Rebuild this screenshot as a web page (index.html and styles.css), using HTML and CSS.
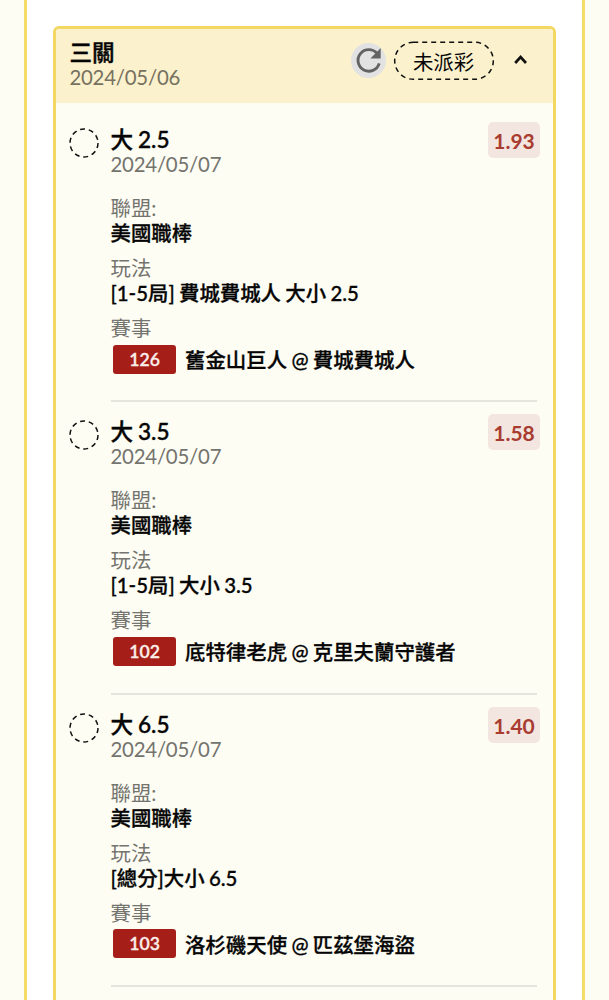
FILE: index.html
```html
<!DOCTYPE html>
<html lang="zh-Hant">
<head>
    <meta charset="UTF-8">
    <meta name="viewport" content="width=device-width, initial-scale=1.0">
    <title>三關</title>
    <link rel="stylesheet" href="styles.css">
</head>
<body>
    <main class="panel">
        <section class="ticket">
            <header class="ticket-header">
                <div class="ticket-info">
                    <h1 class="title">三關</h1>
                    <p class="date">2024/05/06</p>
                </div>
                <div class="ticket-actions">
                    <button class="refresh" aria-label="重新整理">
                        <svg width="35" height="35" viewBox="0 0 35 35">
                            <path d="M28.2 20.4A10.8 10.8 0 1 1 26.2 10.6" fill="none" stroke="#636363" stroke-width="2.9"/>
                            <path d="M29.7 5V15.4H19.4Z" fill="#636363"/>
                        </svg>
                    </button>
                    <span class="status">
                        <svg class="status-line" width="101" height="40" viewBox="0 0 101 40">
                            <rect x="1.7" y="1.3" width="98.6" height="37" rx="18.5"/>
                        </svg>
                        未派彩
                    </span>
                    <button class="toggle" aria-label="收合">
                        <svg width="16" height="12" viewBox="0 0 16 12">
                            <path d="M2.2 9L7.6 3L13 9" fill="none" stroke="#111" stroke-width="2.7"/>
                        </svg>
                    </button>
                </div>
            </header>

            <div class="bets">
                <article class="bet">
                    <svg class="circle" width="30" height="30" viewBox="0 0 30 30"><circle cx="15" cy="15" r="14"/></svg>
                    <div class="bet-body">
                        <div class="bet-top">
                            <div>
                                <h2 class="title">大 2.5</h2>
                                <p class="date">2024/05/07</p>
                            </div>
                            <span class="odds">1.93</span>
                        </div>
                        <dl class="details">
                            <dt>聯盟:</dt>
                            <dd>美國職棒</dd>
                            <dt>玩法</dt>
                            <dd>[1-5局] 費城費城人 大小 2.5</dd>
                            <dt>賽事</dt>
                            <dd class="match"><span class="number">126</span>舊金山巨人 @ 費城費城人</dd>
                        </dl>
                    </div>
                </article>

                <article class="bet">
                    <svg class="circle" width="30" height="30" viewBox="0 0 30 30"><circle cx="15" cy="15" r="14"/></svg>
                    <div class="bet-body">
                        <div class="bet-top">
                            <div>
                                <h2 class="title">大 3.5</h2>
                                <p class="date">2024/05/07</p>
                            </div>
                            <span class="odds">1.58</span>
                        </div>
                        <dl class="details">
                            <dt>聯盟:</dt>
                            <dd>美國職棒</dd>
                            <dt>玩法</dt>
                            <dd>[1-5局] 大小 3.5</dd>
                            <dt>賽事</dt>
                            <dd class="match"><span class="number">102</span>底特律老虎 @ 克里夫蘭守護者</dd>
                        </dl>
                    </div>
                </article>

                <article class="bet">
                    <svg class="circle" width="30" height="30" viewBox="0 0 30 30"><circle cx="15" cy="15" r="14"/></svg>
                    <div class="bet-body">
                        <div class="bet-top">
                            <div>
                                <h2 class="title">大 6.5</h2>
                                <p class="date">2024/05/07</p>
                            </div>
                            <span class="odds">1.40</span>
                        </div>
                        <dl class="details">
                            <dt>聯盟:</dt>
                            <dd>美國職棒</dd>
                            <dt>玩法</dt>
                            <dd>[總分]大小 6.5</dd>
                            <dt>賽事</dt>
                            <dd class="match"><span class="number">103</span>洛杉磯天使 @ 匹茲堡海盜</dd>
                        </dl>
                    </div>
                </article>
            </div>
        </section>
    </main>
</body>
</html>
```
FILE: styles.css
```css
* {
    box-sizing: border-box;
}
body {
    font-family: Lato, "Noto Sans CJK TC", sans-serif;
    font-size: 20.4px;
    background-color: #fefdf4;
    margin: 0;
    height: 1000px;
    overflow: hidden;
    color: #050505;
}
h1, h2, p, dl, dd {
    margin: 0;
}
button {
    border: none;
    padding: 0;
    background: none;
}
svg {
    display: block;
}
.panel {
    margin: 0 24px;
    padding: 26px 26px 0;
    height: 1000px;
    border: solid #f4dc69;
    border-width: 0 3px;
    background-color: #fff;
}
.ticket {
    height: 1020px;
    border: 3px solid #f2d862;
    border-radius: 6px;
    background-color: #fefdf4;
    overflow: hidden;
}
.ticket-header {
    display: flex;
    justify-content: space-between;
    height: 74px;
    padding: 11px 24px 0 13.4px;
    background-color: #fbf1cd;
}
.title {
    font-size: 22.6px;
    font-weight: 500;
    line-height: 26px;
    word-spacing: -0.8px;
    -webkit-text-stroke: 0.4px;
}
.date {
    line-height: 22px;
    letter-spacing: -0.23px;
    color: #74746f;
}
.ticket-header .date {
    color: #77725f;
}
.ticket-actions {
    display: flex;
    align-items: center;
    height: 40px;
}
.refresh {
    border-radius: 50%;
    background-color: #e2e2e2;
}
.status {
    position: relative;
    width: 101px;
    height: 40px;
    margin: 2px 19px 0 7px;
    line-height: 42px;
    text-align: center;
}
.status-line {
    position: absolute;
    top: 0;
    left: 0;
}
.status-line rect {
    fill: none;
    stroke: #111;
    stroke-width: 1.5;
    stroke-dasharray: 5 4;
}
.bets {
    padding-top: 7px;
}
.bet {
    display: flex;
    padding: 0 16px 0 13px;
}
.circle {
    flex: none;
    margin: 18px 12px 0 -0.5px;
}
.circle circle {
    fill: none;
    stroke: #111;
    stroke-width: 1.5;
    stroke-dasharray: 5 3.8;
}
.bet-body {
    flex: 1;
    height: 292.3px;
    padding-top: 17px;
    border-bottom: 2px solid #e6e5dd;
}
.bet-top {
    display: flex;
    justify-content: space-between;
    margin-bottom: 21px;
}
.odds {
    width: 52px;
    height: 36px;
    margin: -5px -3px 0 0;
    border-radius: 5px;
    background-color: #f3e6e0;
    color: #a93c30;
    font-size: 21px;
    font-weight: 700;
    line-height: 37px;
    text-align: center;
}
.details {
    line-height: 25px;
}
.details dt {
    color: #74746f;
}
.details dd {
    margin-bottom: 10px;
    font-weight: 500;
    word-spacing: -0.8px;
    -webkit-text-stroke: 0.3px;
}
.details .match {
    display: flex;
    align-items: center;
    margin: 3px 0 0 2.6px;
    line-height: 32px;
}
.number {
    width: 63px;
    height: 29px;
    margin: -2px 9px 0 0;
    border-radius: 3px;
    background-color: #a51e17;
    color: #fbeeea;
    font-size: 17.6px;
    font-weight: 600;
    line-height: 30px;
    text-align: center;
}
```
